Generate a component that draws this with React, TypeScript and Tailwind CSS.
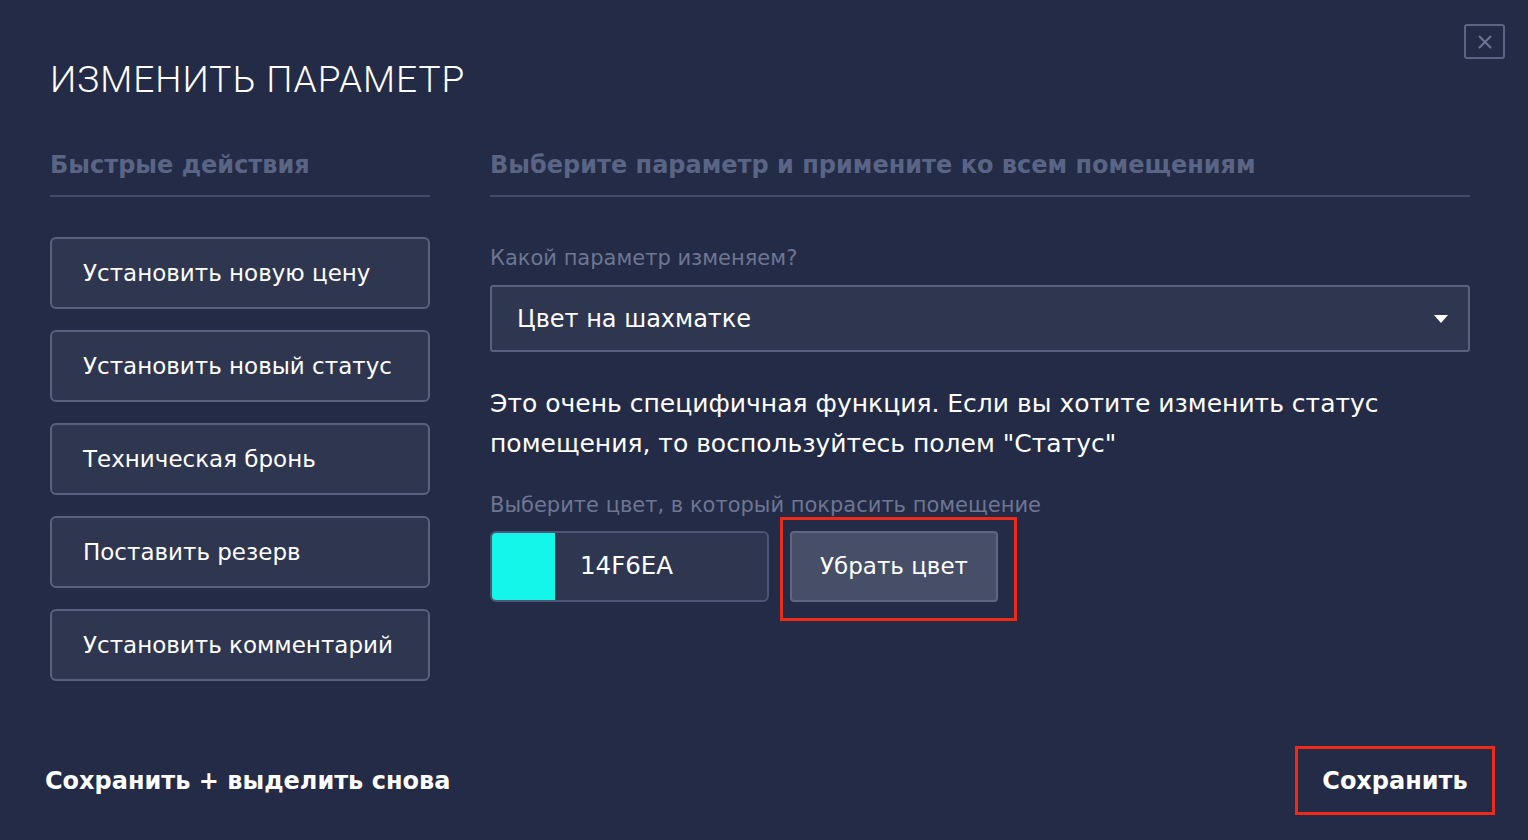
import { X } from "lucide-react";

const QUICK_ACTIONS = [
  "Установить новую цену",
  "Установить новый статус",
  "Техническая бронь",
  "Поставить резерв",
  "Установить комментарий",
];

const FONT = "font-['DejaVu_Sans','Liberation_Sans',sans-serif]";

export default function App() {
  return (
    <div
      className={`relative h-[840px] w-full overflow-hidden bg-[#232b46] pl-[50px] pr-[58px] text-white ${FONT}`}
    >
      {/* close */}
      <button className="absolute right-[23px] top-[24px] flex h-[35px] w-[41px] items-center justify-center rounded-[3px] border-2 border-[#5b6484] text-[#6d7594]">
        <X size={22} strokeWidth={2.2} />
      </button>

      <h1 className="pt-[62px] font-['Roboto',sans-serif] text-[37px] font-light leading-[36px] tracking-[1px]">
        ИЗМЕНИТЬ ПАРАМЕТР
      </h1>

      <div className="mt-[52px] flex gap-[60px]">
        {/* Quick actions */}
        <div className="w-[380px] shrink-0">
          <h2 className="border-b-2 border-[#434c6c] pb-[15px] text-[24px] font-bold leading-[30px] text-[#5a6485]">
            Быстрые действия
          </h2>
          <div className="mt-[40px] flex flex-col gap-[21px]">
            {QUICK_ACTIONS.map((a) => (
              <button
                key={a}
                className="h-[72px] rounded-[6px] border-2 border-[#59617f] bg-[#2e3650] pl-[31px] text-left text-[23px]"
              >
                {a}
              </button>
            ))}
          </div>
        </div>

        {/* Bulk parameter */}
        <div className="flex-1">
          <h2 className="border-b-2 border-[#434c6c] pb-[15px] text-[24px] font-bold leading-[30px] text-[#5a6485]">
            Выберите параметр и примените ко всем помещениям
          </h2>

          <p className="mt-[49px] text-[21px] leading-[24px] text-[#6e7692]">
            Какой параметр изменяем?
          </p>
          <div className="mt-[15px] flex h-[67px] items-center justify-between rounded-[3px] border-2 border-[#59617f] bg-[#2e3650] pl-[25px] pr-[20px] text-[24px]">
            <span>Цвет на шахматке</span>
            <svg width="14" height="8" viewBox="0 0 14 8">
              <path d="M0 0h14L7 8z" fill="#ffffff" />
            </svg>
          </div>

          <p className="mt-[32px] text-[25px] leading-[40px]">
            Это очень специфичная функция. Если вы хотите изменить статус
            <br />
            помещения, то воспользуйтесь полем "Статус"
          </p>

          <p className="mt-[29px] text-[21px] leading-[24px] text-[#6e7692]">
            Выберите цвет, в который покрасить помещение
          </p>
          <div className="mt-[14px] flex items-center gap-[21px]">
            <div className="flex h-[71px] w-[279px] overflow-hidden rounded-[6px] border-2 border-[#4c5573] bg-[#2e3650]">
              <div className="w-[63px] bg-[#14f6ea]" />
              <div className="flex items-center pl-[25px] text-[24.5px]">14F6EA</div>
            </div>
            <div className="relative">
              <button className="h-[71px] w-[208px] rounded-[4px] border-2 border-[#5e6683] bg-[#464e68] text-[23px]">
                Убрать цвет
              </button>
              <div className="pointer-events-none absolute -bottom-[19px] -left-[10px] -right-[19px] -top-[14px] border-[3px] border-[#ef2a17]" />
            </div>
          </div>
        </div>
      </div>

      {/* Footer */}
      <div className="absolute bottom-[25px] left-[45px] right-[33px] flex items-center justify-between">
        <button className="text-[24px] font-bold leading-[30px]">Сохранить + выделить снова</button>
        <button className="h-[69px] w-[200px] border-[3px] border-[#ef2a17] text-[24px] font-bold">
          Сохранить
        </button>
      </div>
    </div>
  );
}
